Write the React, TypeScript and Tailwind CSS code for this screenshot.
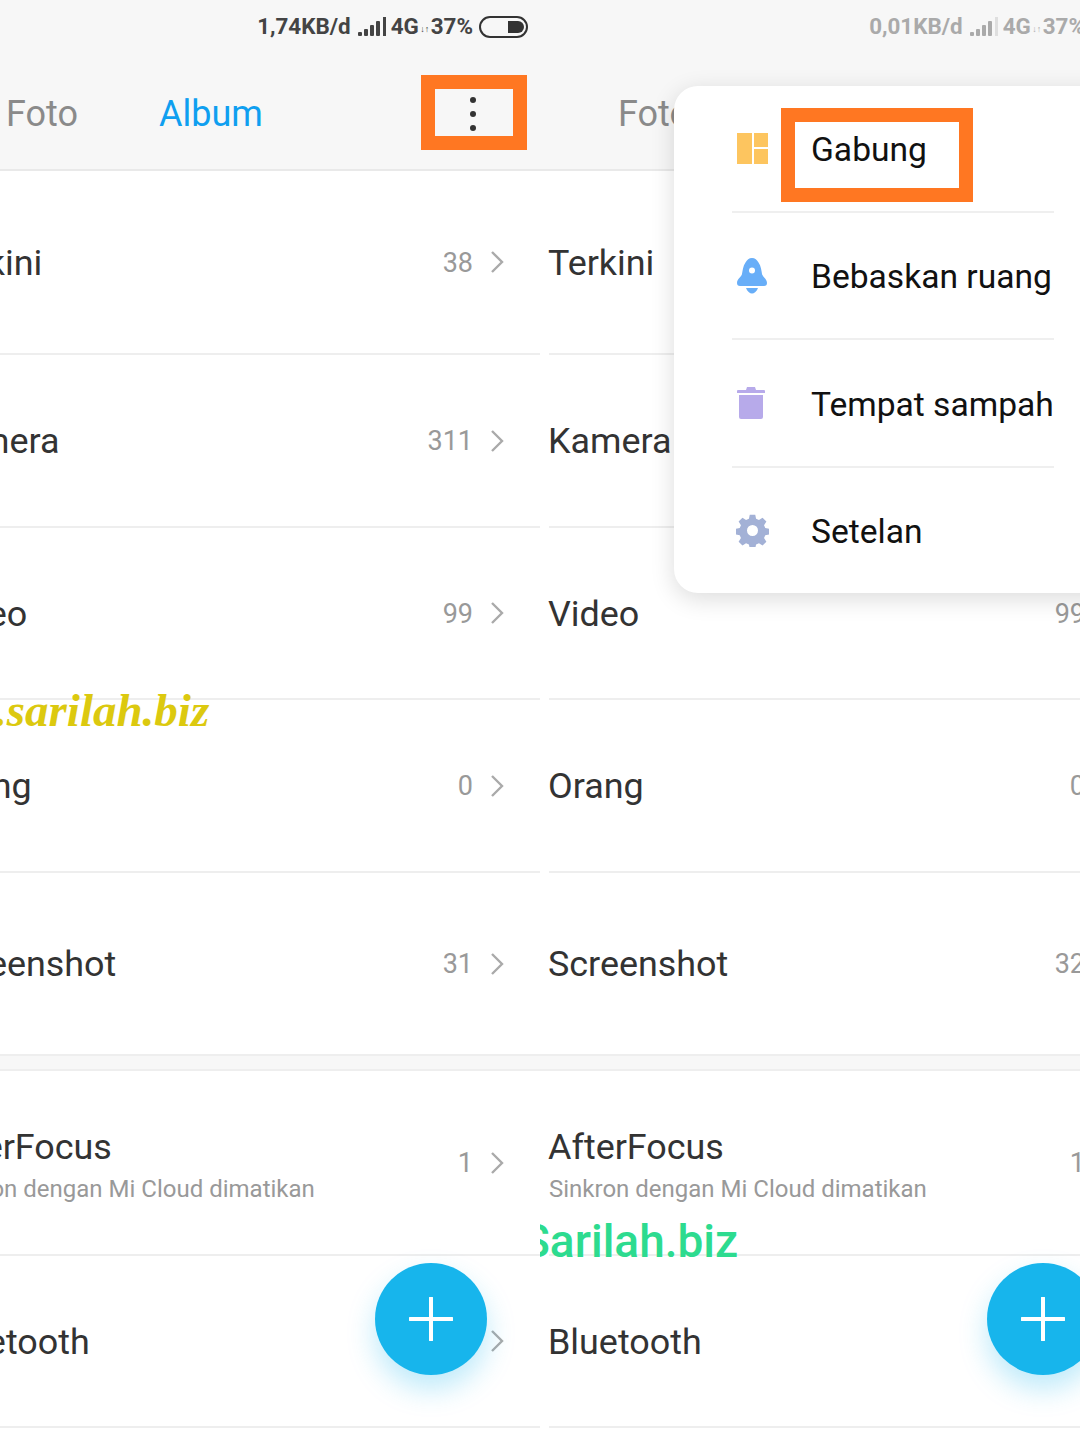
import React from 'react'

type Album = {
  name: string
  count: string
  sub?: string
  height: string
  noLine?: boolean
}

const ALBUMS: Album[] = [
  { name: 'Terkini', count: '38', height: 'h-[184px]' },
  { name: 'Kamera', count: '311', height: 'h-[173px]' },
  { name: 'Video', count: '99', height: 'h-[172px]' },
  { name: 'Orang', count: '0', height: 'h-[173px]' },
  { name: 'Screenshot', count: '31', height: 'h-[181px]', noLine: true },
]

const CLOUD_ALBUMS: Album[] = [
  { name: 'AfterFocus', count: '1', sub: 'Sinkron dengan Mi Cloud dimatikan', height: 'h-[185px]' },
  { name: 'Bluetooth', count: '', height: 'h-[172px]' },
]

const Signal = ({ dim }: { dim?: boolean }) => (
  <svg width="30" height="20" viewBox="0 0 30 20" className="ml-[7px] mr-[3px]" fill="currentColor">
    <rect x="0" y="15" width="4" height="4" rx="1" />
    <rect x="6" y="12" width="4" height="7" rx="1" />
    <rect x="12" y="8" width="4" height="11" rx="1" />
    <rect x="18" y="4" width="4" height="15" rx="1" />
    <rect x="25" y="0" width="3" height="19" opacity={dim ? 0.3 : 1} />
  </svg>
)

const Battery = () => (
  <svg width="49" height="22" viewBox="0 0 49 22" fill="none" className="text-[#333]">
    <rect x="1" y="1" width="47" height="20" rx="10" stroke="currentColor" strokeWidth="2" />
    <path d="M29 5h10a6 6 0 0 1 0 12H29z" fill="currentColor" />
  </svg>
)

const StatusBar = ({ speed, dim }: { speed: string; dim?: boolean }) => (
  <div className={`h-[54px] flex items-center justify-end pr-[12px] font-bold text-[22.4px] ${dim ? 'text-[#aaa]' : 'text-[#444]'}`}>
    <span>{speed}</span>
    <Signal dim={dim} />
    <span>4G</span>
    <span className="w-[12px] text-center text-[9px] font-normal mt-[6px]">↓↑</span>
    <span>37%</span>
    <span className="ml-[6px] flex"><Battery /></span>
  </div>
)

const Chevron = () => (
  <svg width="14" height="24" viewBox="0 0 14 24" fill="none" stroke="#aaa" strokeWidth="2.4">
    <path d="M2 2l10 10L2 22" />
  </svg>
)

const AlbumRow = ({ album, count }: { album: Album; count?: string }) => (
  <div className={`${album.height} ml-[9px] flex items-center ${album.noLine ? '' : 'border-b-2 border-[#eeeeee]'}`}>
    <div className={`flex-1 min-w-0 -ml-[1px] ${album.sub ? 'pt-[3px]' : 'pt-[1px]'}`}>
      <div className="text-[35.9px] leading-[42px] text-[#333]">{album.name}</div>
      {album.sub && <div className="text-[24px] leading-[28px] mt-[7px] ml-[1px] text-[#999]">{album.sub}</div>}
    </div>
    <span className="text-[27px] pt-[2px] text-[#999]">{count ?? album.count}</span>
    <span className="ml-[17px] mr-[36px] flex"><Chevron /></span>
  </div>
)

const Fab = () => (
  <div className="absolute left-[447px] top-[1263px] w-[112px] h-[112px] rounded-full bg-[#17b5ec] shadow-[0_14px_28px_rgba(23,181,236,0.28)] flex items-center justify-center">
    <svg width="44" height="44" viewBox="0 0 44 44" stroke="#fff" strokeWidth="4" strokeLinecap="round">
      <path d="M22 1v42M1 22h42" />
    </svg>
  </div>
)

const AlbumScreen = ({ speed, dim, children }: { speed: string; dim?: boolean; children?: React.ReactNode }) => (
  <div className="relative w-[612px] h-[1440px] bg-white font-['Roboto',sans-serif]">
    <div className="h-[171px] bg-[#f7f7f7] border-b-2 border-[#e9e9e9]">
      <StatusBar speed={speed} dim={dim} />
      <div className="h-[116px] pt-[3px] flex items-center text-[36px]">
        <span className="ml-[78px] text-[#8a8a8a]">Foto</span>
        <span className="ml-[81px] text-[#0f9ff0]">Album</span>
        <div className="ml-auto mr-[64px] flex flex-col gap-[8px]">
          <span className="w-[6px] h-[6px] rounded-full bg-[#333]" />
          <span className="w-[6px] h-[6px] rounded-full bg-[#333]" />
          <span className="w-[6px] h-[6px] rounded-full bg-[#333]" />
        </div>
      </div>
    </div>
    {ALBUMS.map((album) => (
      <AlbumRow key={album.name} album={album} count={dim && album.name === 'Screenshot' ? '32' : undefined} />
    ))}
    <div className="h-[17px] bg-[#f7f7f7] border-y-2 border-[#eeeeee]" />
    {CLOUD_ALBUMS.map((album) => (
      <AlbumRow key={album.name} album={album} />
    ))}
    <Fab />
    {children}
  </div>
)

const MergeIcon = () => (
  <svg width="31" height="31" viewBox="0 0 31 31" fill="#fdc55f">
    <rect x="0" y="0" width="15" height="31" />
    <rect x="17" y="0" width="14" height="14" />
    <rect x="17" y="16" width="14" height="15" />
  </svg>
)

const BellIcon = () => (
  <svg width="30" height="36" viewBox="0 0 30 36" fill="#68aef8">
    <path d="M15 0c3 0 5 2 6.500 4.500C24 8 24.500 13 25 16c.5 2.500 5 5 5 9 0 2-1 3-3 3H3c-2 0-3-1-3-3 0-4 4.500-6.500 5-9 .5-3 1-8 3.500-11.500C10 2 12 0 15 0z" />
    <circle cx="15" cy="12.500" r="3" fill="#fff" />
    <path d="M9 30h12c-1 3.500-4 5.500-6 5.500S10 33.500 9 30z" />
  </svg>
)

const TrashIcon = () => (
  <svg width="28" height="32" viewBox="0 0 28 32" fill="#b7aaea">
    <path d="M10 0h8l1 3h8a1 1 0 0 1 1 1v2H0V4a1 1 0 0 1 1-1h8z" />
    <path d="M2 8h24v22a2 2 0 0 1-2 2H4a2 2 0 0 1-2-2z" />
  </svg>
)

const GearIcon = () => (
  <svg width="33" height="33" viewBox="0 0 24 24" className="-ml-[1px]">
    <path
      fill="#a3b1d6"
      fillRule="evenodd"
      d="M10 .5h4l.6 3 2.100.9 2.600-1.700 2.800 2.800-1.700 2.600.9 2.100 3 .6v4l-3 .6-.9 2.100 1.700 2.600-2.800 2.800-2.600-1.700-2.100.9-.6 3h-4l-.6-3-2.100-.9-2.600 1.700-2.800-2.800 1.700-2.600-.9-2.100-3-.6v-4l3-.6.9-2.100-1.700-2.600 2.800-2.800 2.600 1.700 2.100-.9zM12 8a4 4 0 1 0 0 8 4 4 0 0 0 0-8z"
    />
  </svg>
)

const MENU = [
  { label: 'Gabung', icon: <MergeIcon />, height: 'h-[127px]', line: true },
  { label: 'Bebaskan ruang', icon: <BellIcon />, height: 'h-[127px]', line: true },
  { label: 'Tempat sampah', icon: <TrashIcon />, height: 'h-[128px]', line: true },
  { label: 'Setelan', icon: <GearIcon />, height: 'h-[125px]', line: false },
]

const PopupMenu = () => (
  <div className="absolute left-[134px] top-[86px] w-[478px] rounded-l-[24px] bg-white shadow-[0_6px_24px_rgba(0,0,0,0.14)] pl-[58px]">
    {MENU.map((item) => (
      <div
        key={item.label}
        className={`${item.height} w-[322px] flex items-center ${item.line ? 'border-b-2 border-[#efefef]' : ''}`}
      >
        <span className="w-[79px] shrink-0 pl-[5px] flex items-center">{item.icon}</span>
        <span className="text-[33.6px] pt-[4px] text-[#111] whitespace-nowrap">{item.label}</span>
      </div>
    ))}
    {/* orange marker round Gabung */}
    <div className="absolute left-[107px] top-[22px] w-[192px] h-[94px] border-[14px] border-[#ff7722]" />
  </div>
)

export default function App() {
  return (
    <div className="w-[1080px] h-[1440px] flex overflow-hidden bg-white">
      <div className="relative w-[540px] h-[1440px] overflow-hidden">
        <div className="ml-[-72px]">
          <AlbumScreen speed="1,74KB/d">
            {/* orange marker round the overflow dots */}
            <div className="absolute left-[493px] top-[75px] w-[106px] h-[75px] border-[14px] border-[#ff7722]" />
          </AlbumScreen>
        </div>
        <div className="absolute left-[-5px] top-[681px] text-[47px] leading-[58px] font-bold italic text-[#dcc90f] font-['Liberation_Serif',serif] whitespace-nowrap">
          .sarilah.biz
        </div>
      </div>
      <div className="relative w-[540px] h-[1440px] overflow-hidden">
        <AlbumScreen speed="0,01KB/d" dim>
          <PopupMenu />
        </AlbumScreen>
        <div className="absolute left-[-18px] top-[1213px] text-[46px] leading-[56px] font-medium text-[#2ddb8f] font-['Roboto',sans-serif] whitespace-nowrap">
          Sarilah.biz
        </div>
      </div>
    </div>
  )
}
